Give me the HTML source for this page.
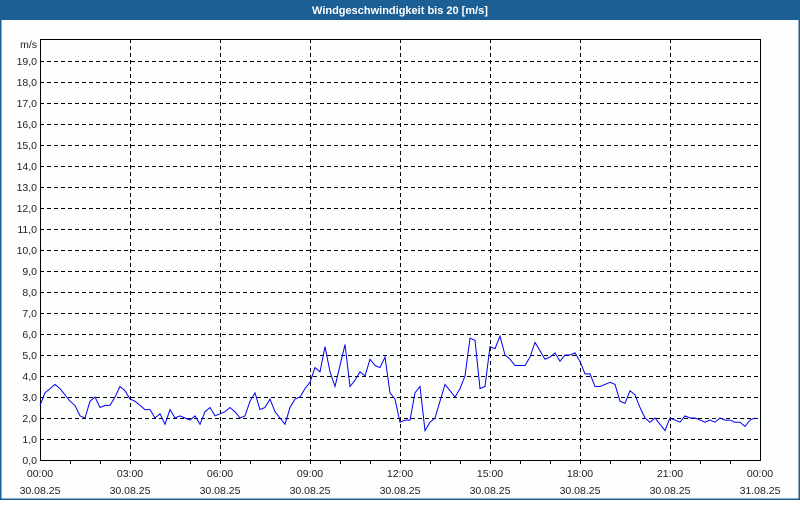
<!DOCTYPE html>
<html><head><meta charset="utf-8"><style>
body{margin:0;width:800px;height:500px;overflow:hidden;background:#fff;font-family:"Liberation Sans","DejaVu Sans",sans-serif}
</style></head><body>
<svg width="800" height="500" xmlns="http://www.w3.org/2000/svg" font-family="Liberation Sans, DejaVu Sans, sans-serif" font-size="10.5">
<rect x="0" y="0" width="800" height="500" fill="#fdfefe"/>
<rect x="0.5" y="0.5" width="799" height="499" fill="none" stroke="#1c5f95" stroke-width="2"/>
<rect x="0" y="0" width="800" height="20" fill="#1c5f95"/>
<text x="400" y="14" text-anchor="middle" fill="#fff" font-weight="bold" font-size="11">Windgeschwindigkeit bis 20 [m/s]</text>
<g stroke="#000" stroke-width="1" stroke-dasharray="4,3" shape-rendering="crispEdges">
<path d="M40 61.5H760M40 82.5H760M40 103.5H760M40 124.5H760M40 145.5H760M40 166.5H760M40 187.5H760M40 208.5H760M40 229.5H760M40 250.5H760M40 271.5H760M40 292.5H760M40 313.5H760M40 334.5H760M40 355.5H760M40 376.5H760M40 397.5H760M40 418.5H760M40 439.5H760"/>
<path d="M130.5 39V460M220.5 39V460M310.5 39V460M400.5 39V460M490.5 39V460M580.5 39V460M670.5 39V460"/>
</g>
<g stroke="#000" stroke-width="1" shape-rendering="crispEdges" fill="none">
<rect x="40.5" y="39.5" width="720" height="421"/>
<path d="M70.5 460V464M100.5 460V464M130.5 460V464M160.5 460V464M190.5 460V464M220.5 460V464M250.5 460V464M280.5 460V464M310.5 460V464M340.5 460V464M370.5 460V464M400.5 460V464M430.5 460V464M460.5 460V464M490.5 460V464M520.5 460V464M550.5 460V464M580.5 460V464M610.5 460V464M640.5 460V464M670.5 460V464M700.5 460V464M730.5 460V464"/>
</g>
<g fill="#222" text-anchor="end">
<text x="37" y="48">m/s</text>
<text x="37" y="65">19,0</text><text x="37" y="86">18,0</text><text x="37" y="107">17,0</text><text x="37" y="128">16,0</text><text x="37" y="149">15,0</text><text x="37" y="170">14,0</text><text x="37" y="191">13,0</text><text x="37" y="212">12,0</text><text x="37" y="233">11,0</text><text x="37" y="254">10,0</text><text x="37" y="275">9,0</text><text x="37" y="296">8,0</text><text x="37" y="317">7,0</text><text x="37" y="338">6,0</text><text x="37" y="359">5,0</text><text x="37" y="380">4,0</text><text x="37" y="401">3,0</text><text x="37" y="422">2,0</text><text x="37" y="443">1,0</text><text x="37" y="464">0,0</text>
</g>
<g fill="#222" text-anchor="middle">
<text x="40" y="477">00:00</text><text x="130" y="477">03:00</text><text x="220" y="477">06:00</text><text x="310" y="477">09:00</text><text x="400" y="477">12:00</text><text x="490" y="477">15:00</text><text x="580" y="477">18:00</text><text x="670" y="477">21:00</text><text x="760" y="477">00:00</text>
<text x="40" y="494">30.08.25</text><text x="130" y="494">30.08.25</text><text x="220" y="494">30.08.25</text><text x="310" y="494">30.08.25</text><text x="400" y="494">30.08.25</text><text x="490" y="494">30.08.25</text><text x="580" y="494">30.08.25</text><text x="670" y="494">30.08.25</text><text x="760" y="494">31.08.25</text>
</g>
<g transform="translate(0,460) scale(1,-21)">
<polyline fill="none" stroke="#0000ee" stroke-width="1" vector-effect="non-scaling-stroke" points="40,2.6 45,3.2 50,3.4 55,3.6 60,3.4 65,3.1 70,2.8 75,2.6 80,2.1 85,2.0 90,2.8 95,3.0 100,2.5 105,2.6 110,2.6 115,3.0 120,3.5 125,3.3 130,2.9 135,2.8 140,2.6 145,2.4 150,2.4 155,2.0 160,2.2 165,1.7 170,2.4 175,2.0 180,2.1 185,2.0 190,1.9 195,2.1 200,1.7 205,2.3 210,2.5 215,2.1 220,2.2 225,2.3 230,2.5 235,2.3 240,2.0 245,2.1 250,2.8 255,3.2 260,2.4 265,2.5 270,2.9 275,2.3 280,2.0 285,1.7 290,2.5 295,2.9 300,3.0 305,3.4 310,3.7 315,4.4 320,4.2 325,5.4 330,4.2 335,3.5 340,4.5 345,5.5 350,3.5 355,3.8 360,4.2 365,4.0 370,4.8 375,4.5 380,4.4 385,4.9 390,3.2 395,2.9 400,1.8 405,1.9 410,1.9 415,3.2 420,3.5 425,1.4 430,1.8 435,2.0 440,2.8 445,3.6 450,3.3 455,3.0 460,3.4 465,4.0 470,5.8 475,5.7 480,3.4 485,3.5 490,5.4 495,5.3 500,5.9 505,5.0 510,4.8 515,4.5 520,4.5 525,4.5 530,4.9 535,5.6 540,5.2 545,4.8 550,4.9 555,5.1 560,4.7 565,5.0 570,5.0 575,5.1 580,4.7 585,4.1 590,4.1 595,3.5 600,3.5 605,3.6 610,3.7 615,3.6 620,2.8 625,2.7 630,3.3 635,3.1 640,2.5 645,2.0 650,1.8 655,2.0 660,1.7 665,1.4 670,2.0 675,1.9 680,1.8 685,2.1 690,2.0 695,2.0 700,1.9 705,1.8 710,1.9 715,1.8 720,2.0 725,1.9 730,1.9 735,1.8 740,1.8 745,1.6 750,1.9 755,2.0"/>
</g>
</svg>
</body></html>
